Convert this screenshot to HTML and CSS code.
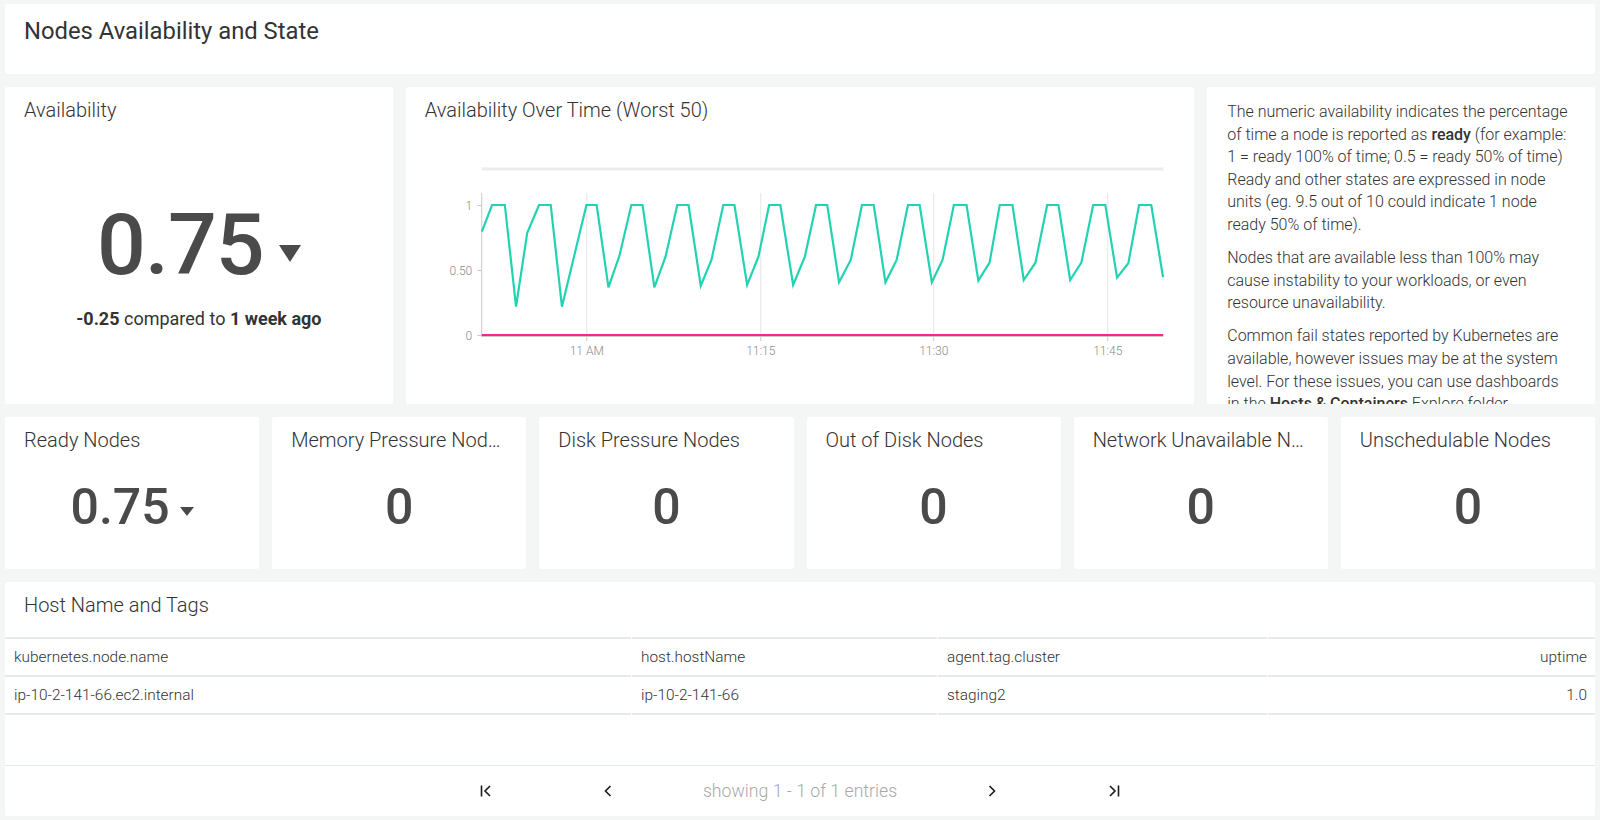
FILE: index.html
```html
<!DOCTYPE html>
<html lang="en">
<head>
<meta charset="utf-8">
<title>Nodes Availability and State</title>
<link rel="stylesheet" href="styles.css">
</head>
<body>
<main class="dash">
  <section class="card header-card span-12">
    <h1 class="page-title">Nodes Availability and State</h1>
  </section>

  <section class="card span-3 big-card">
    <h2 class="card-title">Availability</h2>
    <div class="big-row"><span class="big-num">0.75</span><span class="tri tri-lg"></span></div>
    <div class="compare"><b>-0.25</b> compared to <b>1 week ago</b></div>
  </section>

  <section class="card span-6 chart-card">
    <h2 class="card-title">Availability Over Time (Worst 50)</h2>
    <svg class="chart" width="788" height="240" viewBox="0 0 788 240" xmlns="http://www.w3.org/2000/svg">
      <g transform="translate(-405.75,-127)">
        <line x1="481.5" y1="169" x2="1163" y2="169" stroke="#ececec" stroke-width="3"/>
        <g stroke="#e6e6e6" stroke-width="1">
          <line x1="586.5" y1="193" x2="586.5" y2="336"/>
          <line x1="760.5" y1="193" x2="760.5" y2="336"/>
          <line x1="933.5" y1="193" x2="933.5" y2="336"/>
          <line x1="1107.5" y1="193" x2="1107.5" y2="336"/>
        </g>
        <g stroke="#c9c9c9" stroke-width="1">
          <line x1="481.5" y1="193" x2="481.5" y2="337"/>
          <line x1="481.5" y1="336.5" x2="1163" y2="336.5"/>
          <line x1="477" y1="205.5" x2="481.5" y2="205.5"/>
          <line x1="477" y1="270.5" x2="481.5" y2="270.5"/>
          <line x1="477" y1="335.5" x2="481.5" y2="335.5"/>
          <line x1="586.5" y1="337" x2="586.5" y2="341"/>
          <line x1="760.5" y1="337" x2="760.5" y2="341"/>
          <line x1="933.5" y1="337" x2="933.5" y2="341"/>
          <line x1="1107.5" y1="337" x2="1107.5" y2="341"/>
        </g>
        <g class="axis-label" text-anchor="end">
          <text x="472" y="210">1</text>
          <text x="472" y="275">0.50</text>
          <text x="472" y="340">0</text>
        </g>
        <g class="axis-label" text-anchor="middle">
          <text x="586.5" y="355">11 AM</text>
          <text x="760.5" y="355">11:15</text>
          <text x="933.5" y="355">11:30</text>
          <text x="1107.5" y="355">11:45</text>
        </g>
        <line x1="481.5" y1="335" x2="1163" y2="335" stroke="#ff2392" stroke-width="2"/>
        <polyline fill="none" stroke="#22d3b2" stroke-width="2.2" points="481.6,231.7 491.8,205 504.6,205 515.8,306.7 527,232.7 538.8,205 550.5,205 561.7,306.7 586.2,205 596.4,205 608.2,287.3 619.4,255 631.1,205 642.3,205 654.1,287.3 665.3,256.7 677,205 688.3,205 700.5,285.7 711.2,260 723,205 734.2,205 746.9,285 758.2,256.7 768.9,205 780.1,205 792.9,285 804.6,256.7 815.8,205 827,205 838.8,282.3 850.5,260 861.7,205 873.5,205 885.2,282.3 896.4,260 907.7,205 919.4,205 931.6,282.3 942.3,260 953.6,205 966.3,205 978.1,280.7 989.3,262.7 999.5,205 1012.2,205 1023.5,280 1035.2,262.7 1046.9,205 1058.2,205 1069.9,280 1081.1,262.7 1092.9,205 1105.1,205 1116.8,277.7 1128.1,263.3 1138.8,205 1151,205 1162.8,277.3"/>
      </g>
    </svg>
  </section>

  <section class="card span-3 text-card">
    <p>The numeric availability indicates the percentage of time a node is reported as <b>ready</b> (for example: 1 = ready 100% of time; 0.5 = ready 50% of time) Ready and other states are expressed in node units (eg. 9.5 out of 10 could indicate 1 node ready 50% of time).</p>
    <p>Nodes that are available less than 100% may cause instability to your workloads, or even resource unavailability.</p>
    <p>Common fail states reported by Kubernetes are available, however issues may be at the system level. For these issues, you can use dashboards in the <b>Hosts &amp; Containers</b> Explore folder.</p>
  </section>

  <section class="card span-2 stat-card">
    <h2 class="card-title">Ready Nodes</h2>
    <div class="stat-row"><span class="stat-num">0.75</span><span class="tri tri-sm"></span></div>
  </section>
  <section class="card span-2 stat-card">
    <h2 class="card-title">Memory Pressure Nodes</h2>
    <div class="stat-row"><span class="stat-num">0</span></div>
  </section>
  <section class="card span-2 stat-card">
    <h2 class="card-title">Disk Pressure Nodes</h2>
    <div class="stat-row"><span class="stat-num">0</span></div>
  </section>
  <section class="card span-2 stat-card">
    <h2 class="card-title">Out of Disk Nodes</h2>
    <div class="stat-row"><span class="stat-num">0</span></div>
  </section>
  <section class="card span-2 stat-card">
    <h2 class="card-title">Network Unavailable Nodes</h2>
    <div class="stat-row"><span class="stat-num">0</span></div>
  </section>
  <section class="card span-2 stat-card">
    <h2 class="card-title">Unschedulable Nodes</h2>
    <div class="stat-row"><span class="stat-num">0</span></div>
  </section>

  <section class="card span-12 table-card">
    <h2 class="card-title table-title">Host Name and Tags</h2>
    <div class="table-wrap">
      <table class="data-table">
        <colgroup>
          <col class="c1"><col class="c2"><col class="c3"><col class="c4">
        </colgroup>
        <thead>
          <tr><th>kubernetes.node.name</th><th>host.hostName</th><th>agent.tag.cluster</th><th class="num">uptime</th></tr>
        </thead>
        <tbody>
          <tr><td>ip-10-2-141-66.ec2.internal</td><td>ip-10-2-141-66</td><td>staging2</td><td class="num">1.0</td></tr>
        </tbody>
      </table>
    </div>
    <nav class="pager">
      <span class="pg-btn pg-outer"><svg width="16" height="16" viewBox="0 0 16 16"><path d="M3.5 2.5v11M12 3l-5 5 5 5" fill="none" stroke="#1a1a1a" stroke-width="1.6"/></svg></span>
      <span class="pg-btn pg-inner"><svg width="16" height="16" viewBox="0 0 16 16"><path d="M10.5 3l-5 5 5 5" fill="none" stroke="#1a1a1a" stroke-width="1.6"/></svg></span>
      <span class="pg-text">showing 1 - 1 of 1 entries</span>
      <span class="pg-btn pg-inner"><svg width="16" height="16" viewBox="0 0 16 16"><path d="M5.5 3l5 5-5 5" fill="none" stroke="#1a1a1a" stroke-width="1.6"/></svg></span>
      <span class="pg-btn pg-outer"><svg width="16" height="16" viewBox="0 0 16 16"><path d="M4 3l5 5-5 5M12.5 2.5v11" fill="none" stroke="#1a1a1a" stroke-width="1.6"/></svg></span>
    </nav>
  </section>
</main>
</body>
</html>
```

FILE: styles.css
```css
* { box-sizing: border-box; }

html, body {
  margin: 0;
  padding: 0;
  background: #f4f6f5;
  height: 820px;
  overflow: hidden;
}

body {
  font-family: Roboto, "Noto Sans", "Liberation Sans", sans-serif;
  color: #333;
}

.dash {
  display: grid;
  grid-template-columns: repeat(12, minmax(0, 1fr));
  grid-template-rows: 70px 317px 152px 234px;
  gap: 13px;
  padding: 4px 5px 0;
}

.card {
  background: #fff;
  border-radius: 3px;
  min-width: 0;
  overflow: hidden;
}

.span-2 { grid-column: span 2; }
.span-3 { grid-column: span 3; }
.span-6 { grid-column: span 6; }
.span-12 { grid-column: span 12; }

.header-card { padding: 13px 19px 0; }

.page-title {
  margin: 0;
  font-size: 23.8px;
  line-height: 28px;
  font-weight: 400;
  color: #333;
}

.card-title {
  margin: 0;
  padding: 12px 20px 0 19px;
  font-size: 20px;
  line-height: 22px;
  font-weight: 300;
  color: #333;
  white-space: nowrap;
  overflow: hidden;
  text-overflow: ellipsis;
}

/* Availability big stat */
.big-card {
  display: flex;
  flex-direction: column;
  align-items: center;
}
.big-card .card-title { align-self: stretch; }

.big-row {
  display: flex;
  align-items: center;
  margin-top: 81px;
}

.big-num {
  font-size: 86px;
  line-height: 86px;
  font-weight: 500;
  color: #4a4a4a;
  letter-spacing: -1px;
}

.tri {
  width: 0;
  height: 0;
  border-style: solid;
  border-color: #4a4a4a transparent transparent transparent;
}
.tri-lg {
  border-width: 17px 11.5px 0 11.5px;
  margin-left: 15px;
  margin-top: 17px;
}
.tri-sm {
  border-width: 9px 7px 0 7px;
  margin-left: 10px;
  margin-top: 8px;
}

.compare {
  margin-top: 19px;
  font-size: 18px;
  line-height: 24px;
  font-weight: 400;
  color: #333;
}
.compare b { font-weight: 700; }

/* chart */
.chart {
  display: block;
  margin-top: 6px;
}
.axis-label {
  font-family: Roboto, "Liberation Sans", sans-serif;
  font-size: 12px;
  font-weight: 300;
  fill: #8a8a8a;
}

/* text card */
.text-card {
  padding: 14px 23px 0 20px;
  font-size: 16px;
  line-height: 22.6px;
  font-weight: 300;
  color: #333;
}
.text-card p { margin: 0 0 10.5px; }
.text-card b { font-weight: 500; }

/* small stats */
.stat-card {
  display: flex;
  flex-direction: column;
}
.stat-row {
  display: flex;
  align-items: center;
  justify-content: center;
  margin-top: 31px;
}
.stat-num {
  font-size: 50px;
  line-height: 50px;
  font-weight: 500;
  color: #4a4a4a;
}

/* table card */
.table-card {
  display: flex;
  flex-direction: column;
}
.table-title { padding-bottom: 21px; }

.table-wrap { flex: 1; }

.data-table {
  table-layout: fixed;
  border-collapse: separate;
  border-spacing: 1px 0;
  margin: 0 -1px;
  width: calc(100% + 2px);
  font-size: 15.4px;
  font-weight: 300;
  color: #333;
}
.data-table .c1 { width: 626px; }
.data-table .c2 { width: 305px; }
.data-table .c3 { width: 329px; }

.data-table th,
.data-table td {
  height: 38px;
  padding: 0 8px 0 9px;
  text-align: left;
  font-weight: 300;
  border-bottom: 2px solid #e6eae9;
  white-space: nowrap;
  overflow: hidden;
}
.data-table th { border-top: 2px solid #e6eae9; height: 40px; }
.data-table .num { text-align: right; }

.pager {
  height: 51px;
  border-top: 1px solid #dfe8e5;
  display: flex;
  align-items: center;
  justify-content: center;
}
.pg-btn {
  width: 40px;
  display: flex;
  justify-content: center;
  align-items: center;
}
.pg-btn svg { display: block; }
.pg-outer + .pg-inner { margin-left: 82px; }
.pg-inner + .pg-outer { margin-left: 82px; }
.pg-text {
  margin: 0 75px;
  font-size: 17.7px;
  font-weight: 300;
  color: #a9a9a9;
}
```
